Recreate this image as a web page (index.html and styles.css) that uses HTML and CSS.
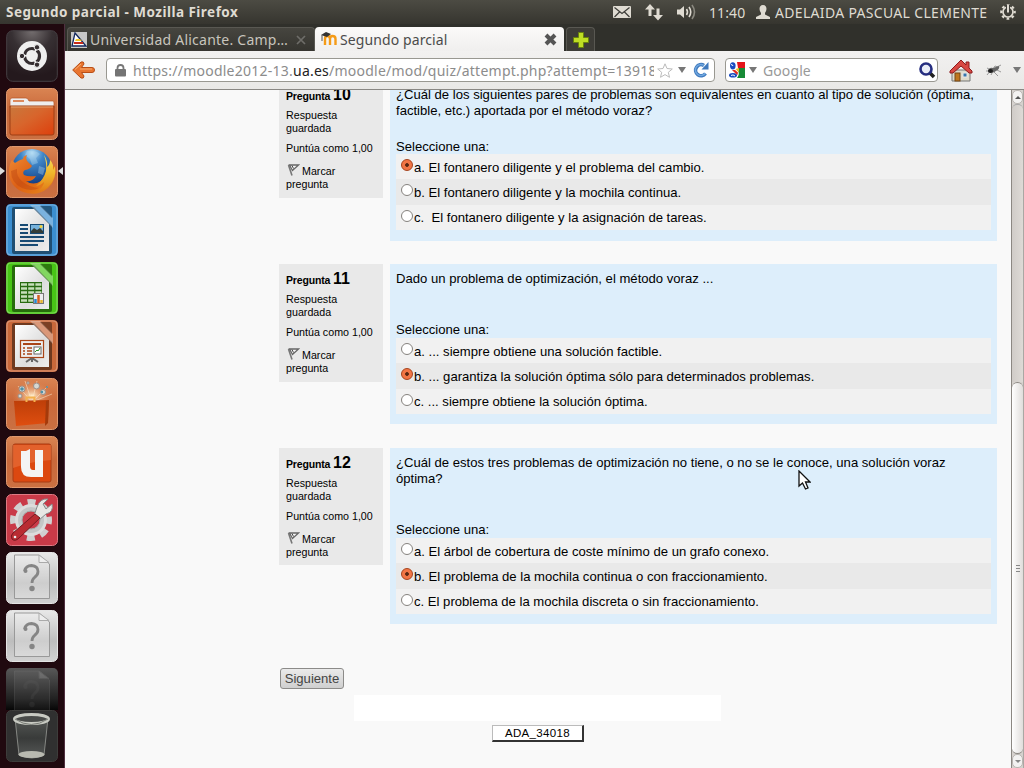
FILE: index.html
```html
<!DOCTYPE html>
<html lang="es">
<head>
<meta charset="utf-8">
<title>Segundo parcial</title>
<link rel="stylesheet" href="styles.css">
</head>
<body>
<svg class="defs" width="0" height="0">
  <defs>
    <linearGradient id="orange" x1="0" y1="0" x2="0" y2="1"><stop offset="0" stop-color="#d98452"/><stop offset=".45" stop-color="#c9683a"/><stop offset="1" stop-color="#cb7042"/></linearGradient>
    <linearGradient id="folder" x1="0" y1="0" x2="1" y2="1"><stop offset="0" stop-color="#c9783c"/><stop offset=".45" stop-color="#d8652c"/><stop offset="1" stop-color="#dd3f0c"/></linearGradient>
    <linearGradient id="paper" x1="0" y1="0" x2="1" y2="1"><stop offset="0" stop-color="#fff"/><stop offset=".6" stop-color="#ddd"/><stop offset="1" stop-color="#eee"/></linearGradient>
    <linearGradient id="silver" x1="0" y1="0" x2="0" y2="1"><stop offset="0" stop-color="#e8e8e8"/><stop offset=".6" stop-color="#bdbdbd"/><stop offset="1" stop-color="#d2d2d2"/></linearGradient>
    <linearGradient id="fade" x1="0" y1="0" x2="0" y2="1"><stop offset="0" stop-color="#585858"/><stop offset=".6" stop-color="#202020"/><stop offset=".8" stop-color="#070707"/></linearGradient>
    <linearGradient id="fox" x1="0" y1="0" x2="1" y2="1"><stop offset="0" stop-color="#f08a34"/><stop offset=".5" stop-color="#dc5f14"/><stop offset="1" stop-color="#ea8c1c"/></linearGradient>
    <linearGradient id="tail" x1="0" y1="0" x2="0" y2="1"><stop offset="0" stop-color="#f7e05a"/><stop offset=".5" stop-color="#f0b52a"/><stop offset="1" stop-color="#e07a18"/></linearGradient>
    <radialGradient id="globe" cx=".5" cy=".1" r=".8"><stop offset="0" stop-color="#b4dcf4"/><stop offset=".35" stop-color="#3f86c8"/><stop offset="1" stop-color="#103a80"/></radialGradient>
    <radialGradient id="dark" cx=".5" cy="0" r=".9"><stop offset="0" stop-color="#756f70"/><stop offset=".45" stop-color="#373033"/><stop offset="1" stop-color="#24191d"/></radialGradient>
    <radialGradient id="glow"><stop offset="0" stop-color="#fff1cf"/><stop offset="1" stop-color="#e07a45" stop-opacity="0"/></radialGradient>
    <linearGradient id="bag" x1="0" y1="0" x2="0" y2="1"><stop offset="0" stop-color="#bd3e08"/><stop offset="1" stop-color="#df4e10"/></linearGradient>
    <linearGradient id="bin" x1="0" y1="0" x2="0" y2="1"><stop offset="0" stop-color="#555855"/><stop offset=".5" stop-color="#393b3a"/><stop offset="1" stop-color="#565957"/></linearGradient>
    <symbol id="flag" viewBox="0 0 13 14"><path d="M1.500 2L5 12.500" fill="none" stroke="#777" stroke-width="1.600"/><path d="M2.500 2H11.500L5.500 7.500Z" fill="#f4f4f4" stroke="#666" stroke-width="1.300"/><path d="M5 2.600L6.500 5.500" stroke="#444"/></symbol>
    <symbol id="doc" viewBox="0 0 52 52">
      <path d="M0 5Q0 0 5 0H47Q52 0 52 5V47Q52 52 47 52H5Q0 52 0 47Z" fill="currentColor"/>
      <path d="M8 3H28L46 22V48Q46 50 44 50H8Q6 50 6 48V5Q6 3 8 3Z" fill="#000" opacity=".45"/>
      <path d="M24 1H34L47 14V24Z" fill="#fff" opacity=".32"/><path d="M34 2H44Q46 2 46 4V14Z" fill="#000" opacity=".38"/>
      <path d="M9 5H28L43 20V47H9Z" fill="url(#paper)"/>
      <path d="M1 5Q1 1 5 1H47Q51 1 51 5V47Q51 51 47 51H5Q1 51 1 47Z" fill="none" stroke="#fff" stroke-width="1.200" opacity=".3"/>
    </symbol>
    <symbol id="unknown" viewBox="0 0 52 52"><path d="M8.500 3H33L43.500 12V46.500H8.500Z" fill="#fff" fill-opacity=".25" stroke="#999"/><path d="M33 3V10.500H43Z" fill="#eee" stroke="#aaa"/><path d="M18.500 19Q20 13.500 25.500 13.500Q32 14 32 19.500Q32 23 28.500 25.500Q26 27.500 26 31" fill="none" stroke="#858585" stroke-width="2.800"/><circle cx="19.500" cy="19" r="2" fill="#858585"/><circle cx="26" cy="36.500" r="2.700" fill="#858585"/></symbol>
  </defs>
</svg>

<header class="panel">
  <span class="panel-title">Segundo parcial - Mozilla Firefox</span>
  <div class="indicators">
    <svg class="ind-mail" width="18" height="12" viewBox="0 0 18 12"><rect width="18" height="12" rx="1" fill="#dfdbd2"/><path d="M1.500 1.500L9 7.500L16.500 1.500M1.500 11L6.500 6M16.500 11L11.500 6" fill="none" stroke="#3c3b37" stroke-width="1.200"/></svg>
    <svg class="ind-net" width="18" height="17" viewBox="0 0 18 17"><path d="M5 0L10 5.500H6.500V12H3.500V5.500H0ZM13 16.500L8 11H11.500V4.500H14.500V11H18Z" fill="#dfdbd2"/></svg>
    <svg class="ind-sound" width="20" height="16" viewBox="0 0 20 16"><path d="M0 5.500H3L7 2V14L3 10.500H0Z" fill="#dfdbd2"/><path d="M9.500 5Q11.500 8 9.500 11M12 3Q15.500 8 12 13" fill="none" stroke="#dfdbd2" stroke-width="1.600"/><path d="M15 1Q20 8 15 15" fill="none" stroke="#8a887f" stroke-width="1.600"/></svg>
    <span class="clock">11:40</span>
    <svg class="ind-user" width="14" height="14" viewBox="0 0 14 14"><path d="M7 0C9.500 0 10.500 1.700 10.500 4Q10.300 6.500 9 8V9.500L14 12V14H0V12L5 9.500V8Q3.700 6.500 3.500 4C3.500 1.700 4.500 0 7 0Z" fill="#dfdbd2"/></svg>
    <span class="user">ADELAIDA PASCUAL CLEMENTE</span>
    <svg class="ind-gear" width="16" height="16" viewBox="0 0 16 16"><circle cx="8" cy="8" r="6.700" fill="none" stroke="#dfdbd2" stroke-width="2.200" stroke-dasharray="2.630 2.630" stroke-dashoffset="1.300"/><circle cx="8" cy="8" r="5" fill="none" stroke="#dfdbd2" stroke-width="1.700"/><path d="M8 1V9" stroke="#3c3b37" stroke-width="4"/><path d="M8 1V8.500" stroke="#dfdbd2" stroke-width="2"/></svg>
  </div>
</header>

<div class="desktop">
  <nav class="launcher">
    <svg class="tile" viewBox="0 0 52 52"><rect x=".7" y=".7" width="50.600" height="50.600" rx="6" fill="url(#dark)" stroke="#454044"/><circle cx="26" cy="26" r="15" fill="#efefef"/><circle cx="26" cy="26" r="7.500" fill="none" stroke="#342d30" stroke-width="3.200" stroke-dasharray="13.700 2" stroke-dashoffset="6.800"/><g fill="#342d30" stroke="#efefef" stroke-width="1"><circle cx="16" cy="26" r="2.700"/><circle cx="31" cy="17.300" r="2.700"/><circle cx="31" cy="34.700" r="2.700"/></g></svg>
    <svg class="tile" viewBox="0 0 52 52"><rect x=".5" y=".5" width="51" height="51" rx="5" fill="url(#orange)" stroke="#df986f"/><path d="M4 12Q4 10 6 10H20Q22 10 23 13H47Q48 13 48 15V20H4Z" fill="#eee" stroke="#b85323" stroke-width=".7"/><path d="M7 12H18V14H7Z" fill="#dc8a5e"/><path d="M4 18H48V45Q48 47 46 47H6Q4 47 4 45Z" fill="url(#folder)" stroke="#9d3e14"/><path d="M5 19H47" stroke="#e5a06e"/></svg>
    <div class="running">
      <svg class="tile" viewBox="0 0 52 52">
        <rect x=".5" y=".5" width="51" height="51" rx="5" fill="url(#orange)" stroke="#df986f"/>
        <circle cx="26" cy="23" r="20" fill="url(#globe)"/>
        <path d="M21 5Q29 4 34 8L30 12L32 17L26 19L24 13L19 9ZM33 20L39 22L37 29L32 27Z" fill="#b9e0f4" opacity=".35"/>
        <path d="M6 14L9 17Q13 14 17 13Q17 10 21 9Q19 13 22 16L26 20Q24 23 19 24Q16 26 18 29Q22 31 30 30Q27 36 20 35Q27 40 35 35Q42 30 42 20L49 20Q51 34 42 42Q31 51 17 46Q3 40 3 26Q3 18 6 14Z" fill="url(#fox)"/>
        <path d="M38 9Q42 15 41 21Q44 19 44 14Q48 18 47 24L49 20Q51 32 43 40Q38 45 31 46Q38 40 38 36Q34 40 30 40Q38 33 40 25Q41 17 38 9Z" fill="url(#tail)"/>
        <path d="M5 25Q5 37 16 42Q26 46 33 42Q23 41 17 36Q10 31 11 23Z" fill="#b8400f" opacity=".4"/>
      </svg>
      <i class="pip pip-left"></i><i class="pip pip-right"></i>
    </div>
    <svg class="tile writer" viewBox="0 0 52 52"><use href="#doc"/><path d="M14 21H22M14 25H22M14 29H22M14 33H38M14 37H38M14 41H32" stroke="#174a73" stroke-width="2"/><rect x="24.500" y="20.500" width="13" height="9" fill="#76b2dc" stroke="#174a73"/><path d="M25 29V27L28 24L31 26L34 24L37 27V29Z" fill="#333c37"/><circle cx="35" cy="22.500" r="1.500" fill="#f4d23b"/></svg>
    <svg class="tile calc" viewBox="0 0 52 52"><use href="#doc"/><rect x="14" y="20" width="22" height="21" fill="#276b10"/><path d="M15 22.500H35.500M15 26.500H35.500M15 30.500H35.500M15 34.500H35.500M15 38.500H35.500" stroke="#c6dfb9" stroke-width="2.600" stroke-dasharray="6 1.200"/><rect x="27.500" y="31.500" width="10" height="10" fill="#eee" stroke="#777"/><path d="M29.500 41V37" stroke="#2389d0" stroke-width="2.500"/><path d="M32.500 41V33" stroke="#d45f20" stroke-width="2.500"/><path d="M35.500 41V38" stroke="#e7b62d" stroke-width="2.500"/></svg>
    <svg class="tile impress" viewBox="0 0 52 52"><use href="#doc"/><path d="M26 38V42M20 42L26 38L32 42" fill="none" stroke="#666" stroke-width="2"/><rect x="14.500" y="20.500" width="23" height="17" fill="#eee" stroke="#a94518" stroke-width="1.200"/><path d="M17 24H35" stroke="#a94518" stroke-width="2"/><path d="M17 28H19M21 28H26M17 31H19M21 31H26M17 34H19M21 34H26" stroke="#a94518" stroke-width="1.700"/><rect x="28" y="27" width="7" height="7" fill="#fff" stroke="#666"/><path d="M29 32L31 30L32 31L34 28" fill="none" stroke="#298c28"/></svg>
    <svg class="tile" viewBox="0 0 52 52"><rect x=".5" y=".5" width="51" height="51" rx="5" fill="url(#orange)" stroke="#df986f"/><ellipse cx="26" cy="18" rx="20" ry="16" fill="url(#glow)"/><path d="M26 24L12 8M26 24L19 3M26 24L31 3M26 24L42 8M26 24L46 16" stroke="#fff0d4" opacity=".5"/><g fill="#d6d8d2" stroke="#9b8e88"><circle cx="16" cy="11" r="3"/><circle cx="30.500" cy="8" r="3"/><circle cx="37" cy="14" r="2.500"/><circle cx="14" cy="18" r="2"/><circle cx="22" cy="5" r="1.200"/></g><g fill="#4b91a9"><circle cx="16" cy="11" r="1.800"/><circle cx="36" cy="14" r="1.200"/><circle cx="41" cy="9" r="1"/></g><path d="M8 23L43 22L42 45L10 48Z" fill="url(#bag)"/><path d="M20.500 24V19.500H28.500V24" fill="none" stroke="#f4b04d" stroke-width="2"/><path d="M40 23L43 22L42 45L39 48Z" fill="#a43a0b"/></svg>
    <svg class="tile" viewBox="0 0 52 52"><rect x=".5" y=".5" width="51" height="51" rx="5" fill="url(#orange)" stroke="#df986f"/><rect x="7" y="8" width="38" height="38" rx="2" fill="#dc4810" stroke="#a83c15"/><path d="M7 9H45V24Q27 25 7 32Z" fill="#e8733f" opacity=".6"/><path d="M15 15H20L24 13V30Q24 34 27 34H29V14H37V41H25Q15 41 15 31Z" fill="#f4f4f4"/></svg>
    <svg class="tile" viewBox="0 0 52 52"><rect x=".5" y=".5" width="51" height="51" rx="5" fill="#c93a48" stroke="#df7b84"/><circle cx="25" cy="26" r="18" fill="none" stroke="#d0d0d0" stroke-width="6" stroke-dasharray="8 6.137" stroke-dashoffset="4"/><circle cx="25" cy="26" r="14.500" fill="#c4c6c6" stroke="#dcdcdc" stroke-width="3"/><circle cx="25" cy="26" r="9" fill="#c93a48" stroke="#a5a8a8"/><path d="M28 22L31 13Q34 4 42 5L37 10L40 15L46 10Q48 18 40 20L33 26Z" fill="#e7e7e4" stroke="#868b8b"/><path d="M29 20L34 24L13 44Q9 48 6 45Q4 42 7 39Z" fill="#b92c32" stroke="#741a20"/><circle cx="9" cy="43" r="1.300" fill="#eee"/></svg>
    <svg class="tile" viewBox="0 0 52 52"><rect x=".5" y=".5" width="51" height="51" rx="5" fill="url(#silver)" stroke="#e4e4e4"/><use href="#unknown"/></svg>
    <svg class="tile" viewBox="0 0 52 52"><rect x=".5" y=".5" width="51" height="51" rx="5" fill="url(#silver)" stroke="#e4e4e4"/><use href="#unknown"/></svg>
    <svg class="tile-cut" viewBox="0 0 52 42"><rect y="0" width="52" height="52" rx="5" fill="url(#fade)"/><use href="#unknown" width="52" height="52" opacity=".2"/></svg>
    <svg class="tile" viewBox="0 0 52 52"><rect x=".5" y=".5" width="51" height="51" rx="5" fill="#303030" stroke="#3d3d3b"/><path d="M9 8H42L38 45Q26 51 13 45Z" fill="url(#bin)" stroke="#858783"/><ellipse cx="25.500" cy="44.500" rx="13" ry="3.500" fill="#b9bab1"/><ellipse cx="25.500" cy="9" rx="17" ry="4.500" fill="#494b49" stroke="#c8cac2" stroke-width="3"/><path d="M9 9Q25 20 42 9" fill="none" stroke="#777a74" stroke-width="1"/></svg>
  </nav>

  <section class="browser">
    <div class="tabs">
      <div class="tab tab-back">
        <svg width="16" height="16" viewBox="0 0 16 16"><rect width="16" height="16" fill="#c8c8c8"/><path d="M4 1L15 14H1Z" fill="#fff" stroke="#14295d" stroke-width="1.300"/><path d="M5 7H9L11 9H4Z" fill="#f1c729"/><path d="M3 11H12" stroke="#c72b1b" stroke-width="2"/></svg>
        <span class="tab-label">Universidad Alicante. Camp…</span>
        <svg class="tab-x" width="10" height="10" viewBox="0 0 10 10"><path d="M1 1L9 9M9 1L1 9" stroke="#6e6d69" stroke-width="1.700"/></svg>
      </div>
      <div class="tab tab-front">
        <svg width="16" height="16" viewBox="0 0 16 16"><path d="M4 14V8Q4 5 6.500 5Q9 5 9 8V14M9 8Q9 5 11.500 5Q14.500 5 14.500 8V14" fill="none" stroke="#f59b16" stroke-width="2.400"/><path d="M0 4L5 1L10 3L6 6Z" fill="#333"/><path d="M1 4V10" stroke="#555"/></svg>
        <span class="tab-label">Segundo parcial</span>
        <svg class="tab-x" width="13" height="13" viewBox="0 0 13 13"><path d="M2 2L11 11M11 2L2 11" stroke="#555" stroke-width="4"/></svg>
      </div>
      <div class="tab tab-new"><svg width="16" height="16" viewBox="0 0 16 16"><path d="M5.500 .5H10.500V5.500H15.500V10.500H10.500V15.500H5.500V10.500H.5V5.500H5.500Z" fill="#bedd24" stroke="#68820d"/></svg></div>
    </div>

    <div class="toolbar">
      <svg class="back" width="23" height="18" viewBox="0 0 23 18"><path d="M.7 9L9 1Q12 0 12 3L9.500 6.500H20Q22.500 6.500 22.500 9T20 11.500H9.500L12 15Q12 18 9 17Z" fill="#e87530" stroke="#b94e16"/><path d="M3 8.500L9 3M8 8H20" stroke="#f7ae72" fill="none"/></svg>
      <div class="address">
        <svg class="lock" width="11" height="13" viewBox="0 0 11 13"><path d="M2.500 6V4Q2.500 1 5.500 1T8.500 4V6" fill="none" stroke="#777" stroke-width="1.800"/><rect y="5" width="11" height="7.500" rx="1" fill="#747474"/></svg>
        <span class="url">https://moodle2012-13.<b>ua.es</b>/moodle/mod/quiz/attempt.php?attempt=13918</span>
        <svg class="star" width="16" height="15" viewBox="0 0 16 15"><path d="M8 .8L10 5.500L15.300 6L11.300 9.300L12.500 14.300L8 11.600L3.500 14.300L4.700 9.300L.7 6L6 5.500Z" fill="#fff" stroke="#bbb"/></svg>
        <i class="caret"></i>
        <svg class="reload" width="16" height="16" viewBox="0 0 16 16"><path d="M12.500 11.500A5.500 5.500 0 1 1 11 3.500" fill="none" stroke="#3f79bd" stroke-width="3.600"/><path d="M8.500 7.500H15.500V0Z" fill="#3f79bd"/><path d="M12.300 11.300A5.500 5.500 0 1 1 11 3.500" fill="none" stroke="#70a7df" stroke-width="1.500"/></svg>
      </div>
      <div class="search">
        <svg class="google" width="16" height="16" viewBox="0 0 16 16"><rect width="16" height="16" fill="#fff"/><path d="M8 0H16V6H9Z" fill="#e3141a"/><path d="M9 6H16V16H8Q11 12 9 9Z" fill="#188a36"/><ellipse cx="3.800" cy="3.800" rx="2.800" ry="3.600" fill="#184bc1"/><ellipse cx="4" cy="13.300" rx="4" ry="2.300" fill="#184bc1"/><path d="M2 3Q3 1.500 4 4M2 13.500Q4 12 6 14" stroke="#fff" fill="none"/><path d="M3 8H6L9 10.500L8.500 13L5 10Z" fill="#e32b20"/><path d="M6.500 7L10 6V10L8.500 9Z" fill="#eaba21"/></svg>
        <i class="caret"></i>
        <span class="placeholder">Google</span>
        <svg class="magnify" width="17" height="17" viewBox="0 0 17 17"><path d="M10.500 10.500L15 15" stroke="#222" stroke-width="3.500"/><circle cx="7" cy="7" r="5.500" fill="#e9edf7" stroke="#262e80" stroke-width="2.600"/></svg>
      </div>
      <svg class="home" width="24" height="23" viewBox="0 0 24 23"><path d="M3 11H21V22H3Z" fill="#dedbcc" stroke="#777"/><path d="M12 1L1 12V14H4L12 7L20 14H23V12L20 9V3H17V6Z" fill="#d84842" stroke="#8d1b1c"/><rect x="6" y="14" width="5" height="8" fill="#be761e" stroke="#754714"/><rect x="14" y="14" width="4" height="4" fill="#3676ab" stroke="#e8e8e8"/></svg>
      <svg class="bug" width="17" height="13" viewBox="0 0 17 13"><path d="M2 4L6 6L2 11M6 11L8 7L13 12M8 5L10 2L13 3M1 7H6M12 3L16 1M12 6L16 8" fill="none" stroke="#999"/><path d="M3 7Q4 3 8 4L14 2Q15 5 11 7Q7 10 3 7Z" fill="#666"/><ellipse cx="5.500" cy="7" rx="2.500" ry="2" fill="#1e1e1e"/></svg>
      <i class="caret"></i>
    </div>

    <div class="viewport">
      <main class="page">
        <div class="question">
          <aside class="info"><h3>Pregunta <b>10</b></h3><p class="state">Respuesta<br>guardada</p><p class="grade">Puntúa como 1,00</p><p class="mark"><svg width="13" height="14"><use href="#flag"/></svg>Marcar<br>pregunta</p></aside>
          <div class="formulation first">
            <div class="qtext">¿Cuál de los siguientes pares de problemas son equivalentes en cuanto al tipo de solución (óptima,<br>factible, etc.) aportada por el método voraz?</div>
            <div class="prompt">Seleccione una:</div>
            <div class="answers">
              <label class="answer"><i class="radio on"></i><span>a. El fontanero diligente y el problema del cambio.</span></label>
              <label class="answer"><i class="radio"></i><span>b. El fontanero diligente y la mochila continua.</span></label>
              <label class="answer"><i class="radio"></i><span>c. &nbsp;El fontanero diligente y la asignación de tareas.</span></label>
            </div>
          </div>
        </div>
        <div class="question">
          <aside class="info"><h3>Pregunta <b>11</b></h3><p class="state">Respuesta<br>guardada</p><p class="grade">Puntúa como 1,00</p><p class="mark"><svg width="13" height="14"><use href="#flag"/></svg>Marcar<br>pregunta</p></aside>
          <div class="formulation">
            <div class="qtext">Dado un problema de optimización, el método voraz ...</div>
            <div class="prompt">Seleccione una:</div>
            <div class="answers">
              <label class="answer"><i class="radio"></i><span>a. ... siempre obtiene una solución factible.</span></label>
              <label class="answer"><i class="radio on"></i><span>b. ... garantiza la solución óptima sólo para determinados problemas.</span></label>
              <label class="answer"><i class="radio"></i><span>c. ... siempre obtiene la solución óptima.</span></label>
            </div>
          </div>
        </div>
        <div class="question">
          <aside class="info last"><h3>Pregunta <b>12</b></h3><p class="state">Respuesta<br>guardada</p><p class="grade">Puntúa como 1,00</p><p class="mark"><svg width="13" height="14"><use href="#flag"/></svg>Marcar<br>pregunta</p></aside>
          <div class="formulation">
            <div class="qtext qtext-tall">¿Cuál de estos tres problemas de optimización no tiene, o no se le conoce, una solución voraz<br>óptima?</div>
            <div class="prompt">Seleccione una:</div>
            <div class="answers">
              <label class="answer"><i class="radio"></i><span>a. El árbol de cobertura de coste mínimo de un grafo conexo.</span></label>
              <label class="answer"><i class="radio on"></i><span>b. El problema de la mochila continua o con fraccionamiento.</span></label>
              <label class="answer"><i class="radio"></i><span>c. El problema de la mochila discreta o sin fraccionamiento.</span></label>
            </div>
          </div>
        </div>
        <button class="next">Siguiente</button>
        <div class="blank"></div>
        <div class="course">ADA_34018</div>
      </main>
      <div class="scrollbar">
        <div class="arrow"><i class="up"></i></div>
        <div class="trough"></div>
        <div class="thumb"><i></i><i></i><i></i></div>
        <div class="arrow"><i class="down"></i></div>
      </div>
    </div>
  </section>
</div>
<svg class="cursor" width="13" height="20" viewBox="0 0 13 20"><path d="M1 1V16L4.500 13L7.500 19L10 18L7.500 12H12Z" fill="#fff" stroke="#111" stroke-width="1.300"/></svg>
</body>
</html>
```
FILE: styles.css
```css
* { box-sizing: border-box; }
body { margin: 0; width: 1024px; height: 768px; overflow: hidden; background: #f9f9f9; font-family: "Liberation Sans", Arial, sans-serif; color: #000; }
svg { display: block; flex: none; }
.defs { position: absolute; }

.panel { height: 24px; display: flex; justify-content: space-between; align-items: center; padding: 0 8px 0 6px; background: linear-gradient(#4c4b43, #36352f); color: #dfdbd2; font-family: "Noto Sans", sans-serif; white-space: nowrap; }
.panel-title { font-weight: 700; font-size: 13.5px; letter-spacing: .47px; }
.indicators { display: flex; align-items: center; }
.ind-net { margin-left: 14px; }
.ind-sound { margin-left: 14px; }
.clock { width: 36px; margin-left: 12px; font-size: 14px; letter-spacing: .1px; }
.ind-user { margin-left: 11px; }
.user { width: 213px; margin-left: 5px; font-size: 14px; letter-spacing: .32px; }
.ind-gear { margin-left: 12px; }

.desktop { display: flex; height: 744px; }
.launcher { width: 65px; flex: none; display: flex; flex-direction: column; gap: 6px; padding: 6px 0 0 6px; background: #20090f; border-right: 1px solid #503040; }
.tile, .tile-cut { width: 52px; height: 52px; }
.tile-cut { height: 42px; margin-bottom: -6px; }
.writer { color: #3b8ed0; }
.calc { color: #48c516; }
.impress { color: #c9683a; }
.running { position: relative; }
.pip { position: absolute; top: 21px; width: 0; height: 0; border: solid transparent; border-width: 4px 0; }
.pip-left { left: -6px; border-left: 5px solid #ddd; }
.pip-right { right: 1px; border-right: 5px solid #ddd; }

.browser { flex: 1; min-width: 0; display: flex; flex-direction: column; }
.tabs { height: 27px; display: flex; align-items: flex-end; padding-left: 2px; background: #30302b; font-family: "Noto Sans", sans-serif; font-size: 14px; }
.tab { display: flex; align-items: center; border-radius: 4px 4px 0 0; white-space: nowrap; }
.tab-back { width: 248px; height: 24px; padding: 0 8px 0 3px; color: #c8c5bd; background: linear-gradient(#46453f, #363530); border: 1px solid #595852; border-bottom: 0; }
.tab-front { width: 249px; height: 24px; padding: 0 7px 0 6px; color: #4b4b4b; background: linear-gradient(#fbfaf9, #f0efee); }
.tab-label { flex: 1; padding-left: 3px; letter-spacing: .24px; }
.tab-front .tab-label { letter-spacing: .1px; }
.tab-new { width: 29px; height: 24px; margin-left: 2px; justify-content: center; background: #3d3c37; border: 1px solid #595852; border-bottom: 0; }

.toolbar { height: 39px; display: flex; align-items: center; padding: 0 3px 0 7px; background: linear-gradient(#f2f1f0, #e9e8e6); border-bottom: 1px solid #898783; font-family: "Noto Sans", sans-serif; font-size: 14px; }
.address, .search { height: 24px; display: flex; align-items: center; background: #fff; border: 1px solid #999891; border-radius: 4px; }
.address { width: 609px; margin-left: 11px; padding: 0 5px 0 8px; }
.url { width: 523px; margin-left: 7px; overflow: hidden; white-space: nowrap; color: #8c8c8c; letter-spacing: .24px; }
.url b { font-weight: 400; color: #222; }
.star { margin-left: 3px; }
.caret { flex: none; width: 0; height: 0; border: solid transparent; border-width: 6px 4px 0; border-top-color: #777; }
.address .caret { margin-left: 5px; }
.reload { margin-left: 7px; }
.search { width: 213px; margin-left: 10px; padding: 0 2px 0 3px; }
.search .caret { margin-left: 4px; }
.placeholder { flex: 1; margin-left: 6px; color: #999; letter-spacing: .1px; }
.magnify { margin-right: -1px; }
.home { margin-left: 11px; }
.bug { margin-left: 12px; }
.bug + .caret { margin-left: 11px; }

.viewport { flex: 1; min-height: 0; display: flex; overflow: hidden; background: #f9f9f9; }
.page { width: 946px; flex: none; margin-top: -10px; padding-left: 214px; font-size: 13.1px; line-height: 16px; white-space: nowrap; }
.question { display: flex; gap: 7px; align-items: flex-start; height: 184px; }
.info { width: 104px; height: 118px; padding: 4px 7px; background: #e9e9e9; font-size: 10.7px; line-height: 13px; }
.info.last { height: 117px; }
.info h3, .info p { margin: 0; }
.info h3 { height: 25px; font-size: 10.5px; line-height: 21px; letter-spacing: -.15px; }
.info h3 b { font-size: 16px; letter-spacing: 0; }
.info .grade { margin-top: 7px; }
.info .mark { margin-top: 10px; }
.mark svg { display: inline-block; margin: -3px 2px 0 1px; vertical-align: -2px; }
.formulation { width: 607px; padding: 7px 6px 10px; background: #ddeefb; }
.qtext { height: 51px; }
.qtext-tall { height: 67px; }
.first { padding-bottom: 11px; }
.first .qtext { height: 52px; }
.first .prompt { height: 15px; }
.answers { background: #f1f1f1; }
.answer { height: 25.33px; display: flex; padding: 5px 0 0 5px; }
.answer span { padding-top: .8px; }
.answer:nth-child(2) { background: #e9e9e9; }
.radio { width: 12px; height: 12px; margin: 0 1px 0 0; border: 1px solid #85827e; border-radius: 50%; background: #fff; }
.radio.on { border-color: #a7421b; background: radial-gradient(circle, #582713 0 1.500px, #f27545 2.200px 5px); }
.next { display: block; width: 64px; height: 21px; margin: 36px 0 0 1px; padding: 0; border: 1px solid #8c8b89; border-radius: 3px; background: linear-gradient(#ebebeb, #cfcfcf); color: #444; font: 13.1px "Liberation Sans", Arial, sans-serif; }
.blank { width: 367px; height: 26px; margin: 6px 0 4px 75px; background: #fff; }
.course { width: 92px; height: 17px; margin-left: 213px; border: 1px solid #bbb; border-right: 2px solid #333; border-bottom: 2px solid #333; background: #fff; font-size: 11.5px; letter-spacing: .35px; line-height: 15px; text-align: center; }

.scrollbar { width: 13px; display: flex; flex-direction: column; background: #d6d2ce; border-left: 1px solid #8c8883; border-right: 1px solid #aaa7a3; }
.arrow { height: 14px; flex: none; display: flex; align-items: center; justify-content: center; background: #f3f2f1; border: 1px solid #b9b5b1; border-radius: 5px; }
.up, .down { border: solid transparent; border-width: 0 3px 3px; border-bottom-color: #555; }
.down { border-width: 3px 3px 0; border-top-color: #888; }
.trough { height: 278px; border-top: 1px solid #aaa; border-radius: 5px 5px 0 0; background: linear-gradient(90deg, #d0ccc8, #dedad6); }
.thumb { flex: 1; display: flex; flex-direction: column; align-items: center; justify-content: center; gap: 2px; border: 1px solid #8c8883; border-width: 1px 0; border-radius: 6px; background: linear-gradient(90deg, #fff, #e0dddb); }
.thumb i { width: 4px; height: 1px; background: #888; }
.cursor { position: absolute; left: 798px; top: 470px; }
```
